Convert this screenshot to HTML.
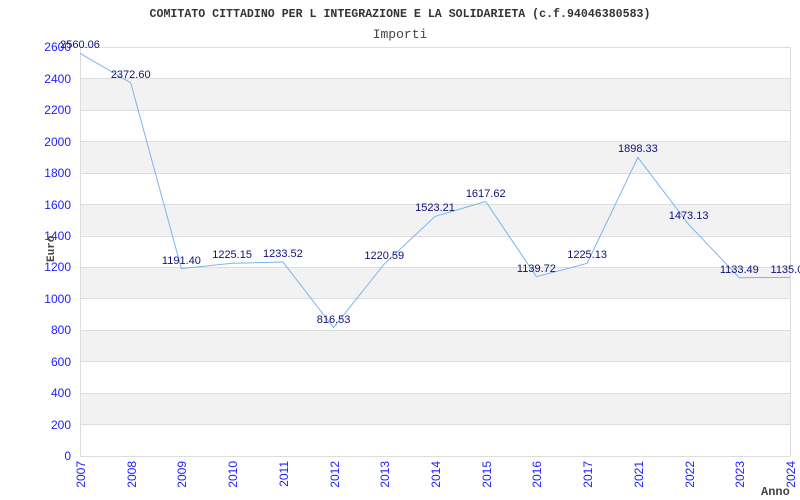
<!DOCTYPE html><html><head><style>body{margin:0;background:#fff}svg{display:block}</style></head><body>
<svg width="800" height="500" xmlns="http://www.w3.org/2000/svg">
<rect width="800" height="500" fill="#fff"/>
<g fill="#f2f2f2">
<rect x="80" y="78.5" width="710" height="31.5"/><rect x="80" y="141.4" width="710" height="31.5"/><rect x="80" y="204.3" width="710" height="31.5"/><rect x="80" y="267.3" width="710" height="31.5"/><rect x="80" y="330.2" width="710" height="31.5"/><rect x="80" y="393.1" width="710" height="31.5"/>
</g>
<g stroke="#ddd" stroke-width="1">
<line x1="80" x2="790" y1="47.5" y2="47.5"/><line x1="80" x2="790" y1="78.5" y2="78.5"/><line x1="80" x2="790" y1="110.5" y2="110.5"/><line x1="80" x2="790" y1="141.5" y2="141.5"/><line x1="80" x2="790" y1="173.5" y2="173.5"/><line x1="80" x2="790" y1="204.5" y2="204.5"/><line x1="80" x2="790" y1="236.5" y2="236.5"/><line x1="80" x2="790" y1="267.5" y2="267.5"/><line x1="80" x2="790" y1="298.5" y2="298.5"/><line x1="80" x2="790" y1="330.5" y2="330.5"/><line x1="80" x2="790" y1="361.5" y2="361.5"/><line x1="80" x2="790" y1="393.5" y2="393.5"/><line x1="80" x2="790" y1="424.5" y2="424.5"/>
<line x1="80.5" x2="80.5" y1="47" y2="456"/><line x1="790.5" x2="790.5" y1="47" y2="456"/><line x1="80" x2="790" y1="456.5" y2="456.5"/>
</g>
<text x="400" y="17" text-anchor="middle" font-family="Liberation Mono,monospace" font-weight="bold" font-size="11.6" fill="#333">COMITATO CITTADINO PER L INTEGRAZIONE E LA SOLIDARIETA (c.f.94046380583)</text>
<text x="400" y="38" text-anchor="middle" font-family="Liberation Mono,monospace" font-size="13" fill="#444">Importi</text>
<g font-family="Liberation Sans,sans-serif" font-size="12" fill="#2020ff" text-anchor="end">
<text x="71" y="51">2600</text><text x="71" y="83">2400</text><text x="71" y="114">2200</text><text x="71" y="146">2000</text><text x="71" y="177">1800</text><text x="71" y="209">1600</text><text x="71" y="240">1400</text><text x="71" y="271">1200</text><text x="71" y="303">1000</text><text x="71" y="334">800</text><text x="71" y="366">600</text><text x="71" y="397">400</text><text x="71" y="429">200</text><text x="71" y="460">0</text>
</g>
<g font-family="Liberation Sans,sans-serif" font-size="12" fill="#2020ff" text-anchor="end">
<text transform="translate(85,461) rotate(-90)">2007</text><text transform="translate(136,461) rotate(-90)">2008</text><text transform="translate(186,461) rotate(-90)">2009</text><text transform="translate(237,461) rotate(-90)">2010</text><text transform="translate(288,461) rotate(-90)">2011</text><text transform="translate(339,461) rotate(-90)">2012</text><text transform="translate(389,461) rotate(-90)">2013</text><text transform="translate(440,461) rotate(-90)">2014</text><text transform="translate(491,461) rotate(-90)">2015</text><text transform="translate(541,461) rotate(-90)">2016</text><text transform="translate(592,461) rotate(-90)">2017</text><text transform="translate(643,461) rotate(-90)">2021</text><text transform="translate(694,461) rotate(-90)">2022</text><text transform="translate(744,461) rotate(-90)">2023</text><text transform="translate(795,461) rotate(-90)">2024</text>
</g>
<text transform="translate(54,262) rotate(-90)" font-family="Liberation Mono,monospace" font-weight="bold" font-size="11" fill="#444">Euro</text>
<text x="761" y="495" font-family="Liberation Mono,monospace" font-weight="bold" font-size="12" fill="#444">Anno</text>
<polyline fill="none" stroke="#7ab4f0" stroke-width="1" points="80,53.3 130.7,82.8 181.4,268.6 232.1,263.3 282.9,262 333.6,327.6 384.3,264 435,216.4 485.7,201.5 536.4,276.7 587.1,263.3 637.9,157.4 688.6,224.3 739.3,277.7 790,277.4"/>
<g font-family="Liberation Sans,sans-serif" font-size="11" fill="#10107a" text-anchor="middle">
<text x="80" y="48">2560.06</text><text x="130.7" y="78">2372.60</text><text x="181.4" y="264">1191.40</text><text x="232.1" y="258">1225.15</text><text x="282.9" y="257">1233.52</text><text x="333.6" y="323">816.53</text><text x="384.3" y="259">1220.59</text><text x="435" y="211">1523.21</text><text x="485.7" y="197">1617.62</text><text x="536.4" y="272">1139.72</text><text x="587.1" y="258">1225.13</text><text x="637.9" y="152">1898.33</text><text x="688.6" y="219">1473.13</text><text x="739.3" y="273">1133.49</text><text x="790" y="273">1135.02</text>
</g>
</svg>
</body></html>
